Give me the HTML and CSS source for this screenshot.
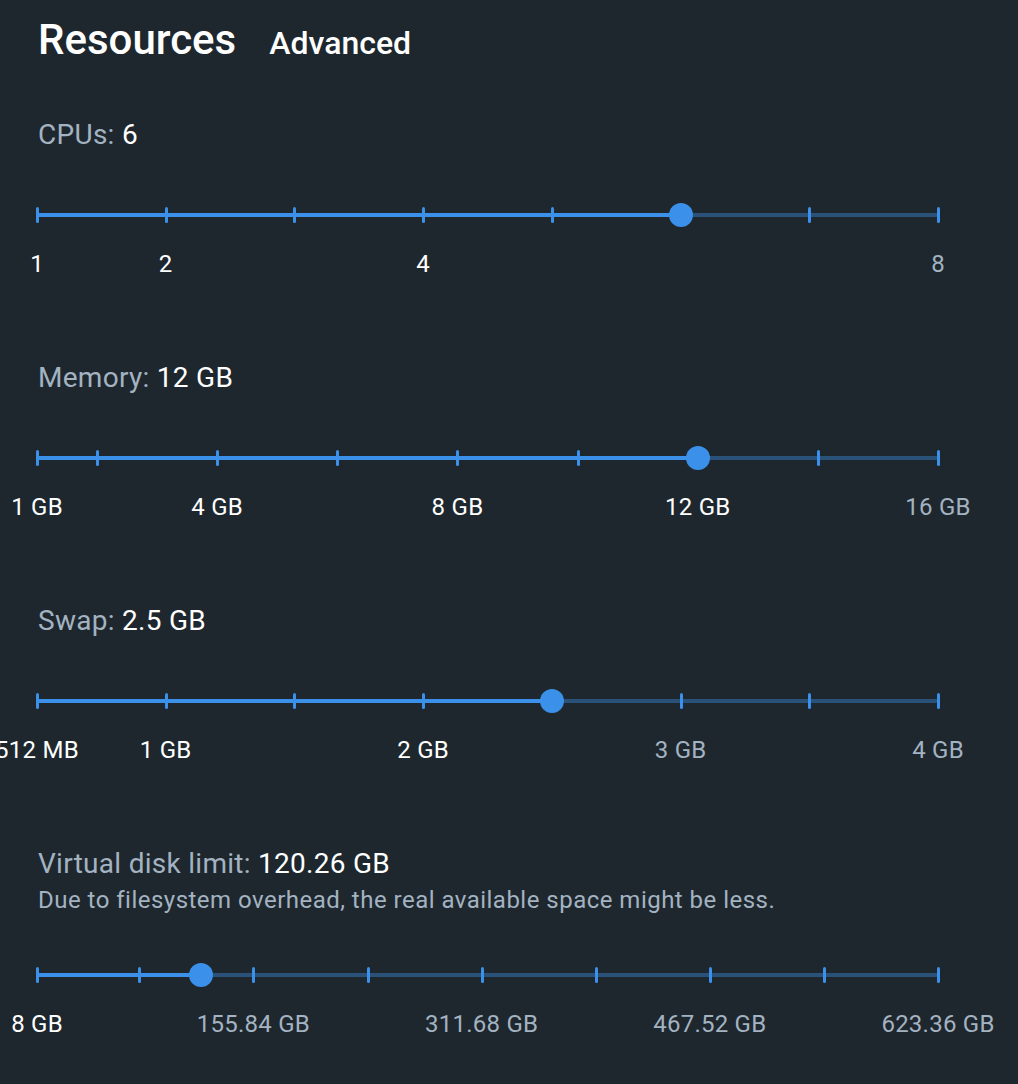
FILE: index.html
```html
<!DOCTYPE html>
<html lang="en">
<head>
  <meta charset="UTF-8" />
  <meta name="viewport" content="width=device-width, initial-scale=1.0"/>
  <title>Resources</title>
  <link rel="stylesheet" href="styles.css">
</head>
<body>

<div class="page">
  <div class="tabs">
    <h1 class="tab tab-active">Resources</h1>
    <span class="tab">Advanced</span>
  </div>

  <section class="setting">
    <div class="setting-label">CPUs: <span class="setting-value">6</span></div>
    <div class="slider-box" id="cpuSlider"></div>
  </section>

  <section class="setting">
    <div class="setting-label">Memory: <span class="setting-value">12 GB</span></div>
    <div class="slider-box" id="memSlider"></div>
  </section>

  <section class="setting">
    <div class="setting-label">Swap: <span class="setting-value">2.5 GB</span></div>
    <div class="slider-box" id="swapSlider"></div>
  </section>

  <section class="setting">
    <div class="setting-label">Virtual disk limit: <span class="setting-value">120.26 GB</span></div>
    <div class="setting-desc">Due to filesystem overhead, the real available space might be less.</div>
    <div class="slider-box slider-box-desc" id="diskSlider"></div>
  </section>
</div>

<script>
  const sliders = [
    {
      id: "cpuSlider", min: 1, max: 8, value: 6, step: 1,
      marks: [[1, "1"], [2, "2"], [4, "4"], [8, "8"]]
    },
    {
      id: "memSlider", min: 1, max: 16, value: 12,
      ticks: [1, 2, 4, 6, 8, 10, 12, 14, 16],
      marks: [[1, "1 GB"], [4, "4 GB"], [8, "8 GB"], [12, "12 GB"], [16, "16 GB"]]
    },
    {
      id: "swapSlider", min: 0.5, max: 4, value: 2.5, step: 0.5,
      marks: [[0.5, "512 MB"], [1, "1 GB"], [2, "2 GB"], [3, "3 GB"], [4, "4 GB"]]
    },
    {
      id: "diskSlider", min: 8, max: 623.36, value: 120.26,
      ticks: [8, 77.92, 155.84, 233.76, 311.68, 389.6, 467.52, 545.44, 623.36],
      marks: [[8, "8 GB"], [155.84, "155.84 GB"], [311.68, "311.68 GB"], [467.52, "467.52 GB"], [623.36, "623.36 GB"]]
    }
  ];

  function pct(s, v) {
    return ((v - s.min) / (s.max - s.min) * 100).toFixed(3) + "%";
  }

  function renderSlider(s) {
    const box = document.getElementById(s.id);
    let ticks = s.ticks;
    if (!ticks) {
      ticks = [];
      for (let v = s.min; v <= s.max + 0.0001; v += s.step) ticks.push(v);
    }

    let html = '<div class="slider"><div class="rail"></div>';
    html += `<div class="track" style="width: ${pct(s, s.value)}"></div>`;
    ticks.forEach(t => {
      html += `<span class="tick" style="left: ${pct(s, t)}"></span>`;
    });
    html += `<span class="thumb" style="left: ${pct(s, s.value)}"></span></div>`;

    html += '<div class="marks">';
    s.marks.forEach(([v, label]) => {
      const cls = v <= s.value ? "mark-label mark-active" : "mark-label";
      html += `<span class="${cls}" style="left: ${pct(s, v)}">${label}</span>`;
    });
    html += "</div>";
    box.innerHTML = html;
  }

  sliders.forEach(renderSlider);
</script>

</body>
</html>
```

FILE: styles.css
```css
body {
  margin: 0;
  background-color: #1e272e;
  font-family: Roboto, "Noto Sans", Arial, sans-serif;
  color: #ffffff;
  overflow: hidden;
}

.page {
  padding: 16px 0 0 37px;
}

.tabs {
  display: flex;
  align-items: baseline;
  gap: 33px;
  height: 48px;
  padding-left: 1px;
}

.tab {
  margin: 0;
  font-size: 32px;
  font-weight: 500;
  line-height: 48px;
  color: #ffffff;
}

.tab-active {
  font-size: 42px;
}

.setting {
  margin-bottom: 81px;
}

.setting:first-of-type {
  margin-top: 53px;
}

.setting-label {
  padding-left: 1px;
  font-size: 28px;
  line-height: 36px;
  letter-spacing: 0.01em;
  color: #a3b3c1;
}

.setting-value {
  color: #ffffff;
}

.setting-desc {
  margin-top: 3px;
  padding-left: 1px;
  font-size: 24px;
  line-height: 30px;
  letter-spacing: 0.02em;
  color: #a3b3c1;
}

.slider-box {
  width: 901px;
  padding-top: 50px;
}

.slider-box-desc {
  padding-top: 48px;
}

.slider {
  position: relative;
  height: 24px;
}

.rail,
.track {
  position: absolute;
  top: 10px;
  left: 0;
  height: 4px;
  border-radius: 2px;
}

.rail {
  right: 0;
  background-color: #2a5278;
}

.track {
  background-color: #3b91e9;
}

.tick {
  position: absolute;
  top: 4px;
  width: 3px;
  height: 16px;
  margin-left: -1px;
  border-radius: 2px;
  background-color: #3b91e9;
}

.thumb {
  position: absolute;
  top: 0;
  width: 24px;
  height: 24px;
  margin-left: -12px;
  border-radius: 50%;
  background-color: #3b91e9;
}

.marks {
  position: relative;
  height: 30px;
  margin-top: 22px;
}

.mark-label {
  position: absolute;
  top: 0;
  transform: translateX(-50%);
  white-space: nowrap;
  font-size: 24px;
  line-height: 30px;
  letter-spacing: 0.01em;
  color: #a3b3c1;
}

.mark-active {
  color: #ffffff;
}
```
